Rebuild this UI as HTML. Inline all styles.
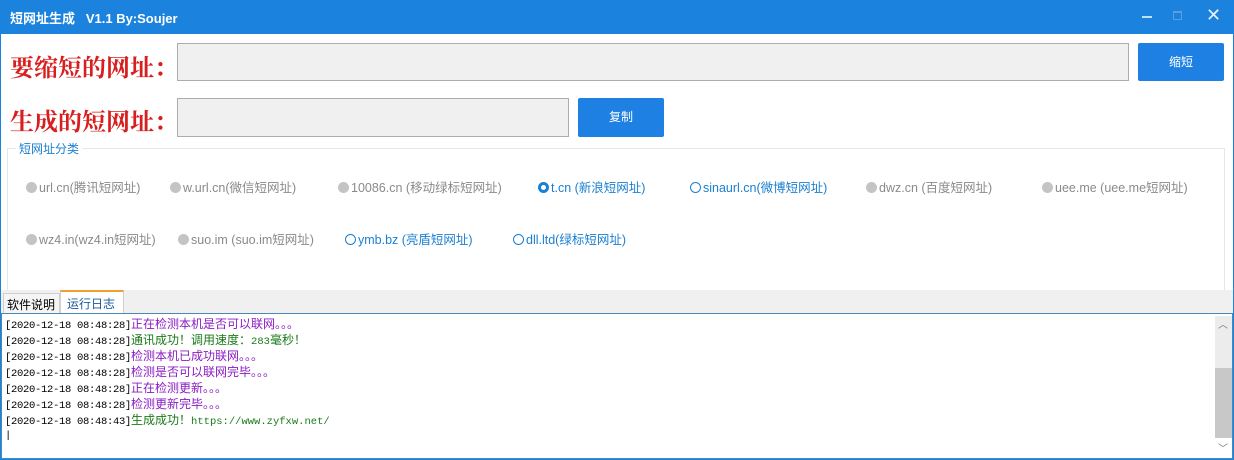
<!DOCTYPE html>
<html><head><meta charset="utf-8"><style>
*{margin:0;padding:0;box-sizing:border-box}
body{width:1234px;height:460px;overflow:hidden;background:#fff;position:relative;font-family:"Liberation Sans","Noto Sans CJK SC",sans-serif}
.a{position:absolute;white-space:nowrap}
.title{left:0;top:0;width:1234px;height:34px;background:#1b83dd}
.lbl{font-family:"Liberation Serif","Noto Serif CJK SC",serif;font-weight:bold;color:#d81e1e;font-size:24px}
.inp{background:#f0f0f0;border:1px solid #acacac}
.btn{background:#1e80e2;color:#fff;font-size:12px;text-align:center;border-radius:2px}
.r{font-size:12.5px;color:#8a8a8a;top:177px}
.r2{top:229px}
.r i{display:inline-block;width:11px;height:11px;border-radius:50%;background:#c4c4c4;vertical-align:-1px;margin-right:2px}
.b{color:#1a7fd0}
.b i{background:#fff;border:1px solid #1a7fd0}
.b i.on{border:3px solid #1a7fd0}
.log{left:5px;top:316px}
.log div{height:16px;line-height:16px;font-family:"Liberation Mono",monospace;font-size:10.5px;letter-spacing:-0.3px}
.p,.g{font-size:12px;letter-spacing:0;font-family:"Liberation Sans","Noto Sans CJK SC",sans-serif}
.p{color:#8a1cc4}.g{color:#1a7a1a}
.g b{font-weight:normal;font-family:"Liberation Mono",monospace;font-size:10.5px}
</style></head><body>
<div class="a" style="left:0;top:0;width:1234px;height:460px;border:1px solid #1b83dd"></div>
<div class="a title"></div>
<div class="a" style="left:10px;top:8px;color:#fff;font-weight:bold;font-size:13px">短网址生成&nbsp;&nbsp;&nbsp;V1.1 By:Soujer</div>
<div class="a" style="left:1142px;top:16px;width:10px;height:2px;background:#bfe0fb"></div>
<div class="a" style="left:1173px;top:11px;width:9px;height:9px;border:1px solid #5a9ede;border-top:2px solid #5a9ede"></div>
<div class="a" style="left:1206px;top:5px;color:#e6f2fc;font-size:18px">✕</div>

<div class="a lbl" style="left:10px;top:48px">要缩短的网址：</div>
<div class="a inp" style="left:177px;top:43px;width:952px;height:38px"></div>
<div class="a btn" style="left:1138px;top:43px;width:86px;height:38px;line-height:38px">缩短</div>
<div class="a lbl" style="left:10px;top:102px">生成的短网址：</div>
<div class="a inp" style="left:177px;top:98px;width:392px;height:39px"></div>
<div class="a btn" style="left:578px;top:98px;width:86px;height:39px;line-height:39px">复制</div>

<div class="a" style="left:7px;top:148px;width:1218px;height:145px;border:1px solid #e6e6e6;border-bottom:none"></div>
<div class="a" style="left:16px;top:140px;background:#fff;padding:0 3px;color:#1a7fd0;font-size:12px">短网址分类</div>

<div class="a r" style="left:26px"><i></i>url.cn(腾讯短网址)</div>
<div class="a r" style="left:170px"><i></i>w.url.cn(微信短网址)</div>
<div class="a r" style="left:338px"><i></i>10086.cn (移动绿标短网址)</div>
<div class="a r b" style="left:538px"><i class="on"></i>t.cn (新浪短网址)</div>
<div class="a r b" style="left:690px"><i></i>sinaurl.cn(微博短网址)</div>
<div class="a r" style="left:866px"><i></i>dwz.cn (百度短网址)</div>
<div class="a r" style="left:1042px"><i></i>uee.me (uee.me短网址)</div>
<div class="a r r2" style="left:26px"><i></i>wz4.in(wz4.in短网址)</div>
<div class="a r r2" style="left:178px"><i></i>suo.im (suo.im短网址)</div>
<div class="a r r2 b" style="left:345px"><i></i>ymb.bz (亮盾短网址)</div>
<div class="a r r2 b" style="left:513px"><i></i>dll.ltd(绿标短网址)</div>

<div class="a" style="left:1px;top:290px;width:1232px;height:24px;background:#f0f0f0"></div>
<div class="a" style="left:3px;top:293px;width:57px;height:21px;border:1px solid #d0d0d0;border-bottom:none;background:#f5f5f5;font-size:12px;padding:2px 0 0 3px">软件说明</div>
<div class="a" style="left:60px;top:290px;width:64px;height:25px;border:1px solid #d0d0d0;border-top:2px solid #f0a030;border-bottom:none;background:#fff;font-size:12px;padding:3px 0 0 6px;color:#1a5a9a">运行日志</div>
<div class="a" style="left:1px;top:313px;width:1232px;height:146px;border:1px solid #4a88b8;background:#fff"></div>
<div class="a" style="left:1215px;top:316px;width:17px;height:122px;background:#ececec"></div>
<div class="a" style="left:1215px;top:368px;width:17px;height:70px;background:#c8c8c8"></div>
<div class="a" style="left:1218px;top:316px;color:#777;font-size:10px">︿</div>
<div class="a" style="left:1218px;top:440px;color:#777;font-size:10px">﹀</div>

<div class="a log">
<div>[2020-12-18 08:48:28]<span class="p">正在检测本机是否可以联网。。。</span></div>
<div>[2020-12-18 08:48:28]<span class="g">通讯成功！调用速度：<b>283</b>毫秒！</span></div>
<div>[2020-12-18 08:48:28]<span class="p">检测本机已成功联网。。。</span></div>
<div>[2020-12-18 08:48:28]<span class="p">检测是否可以联网完毕。。。</span></div>
<div>[2020-12-18 08:48:28]<span class="p">正在检测更新。。。</span></div>
<div>[2020-12-18 08:48:28]<span class="p">检测更新完毕。。。</span></div>
<div>[2020-12-18 08:48:43]<span class="g">生成成功！<b>https://www.zyfxw.net/</b></span></div>
<div>|</div>
</div>
</body></html>
